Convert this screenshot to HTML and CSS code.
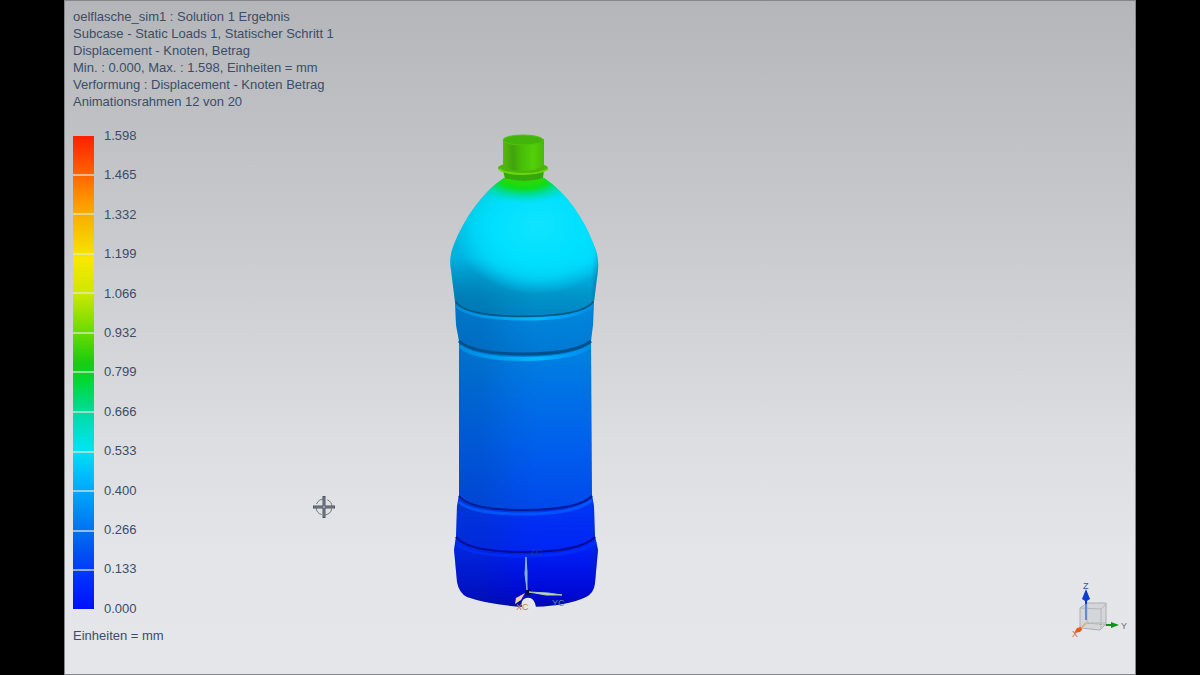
FILE: index.html
```
<!DOCTYPE html>
<html lang="de">

  <head>
    <meta charset="utf-8">
    <title>oelflasche_sim1</title>
    <link rel="stylesheet" href="styles.css">
  </head>
  <body>
    <main class="viewport">
      <div class="result-info">
        <div>oelflasche_sim1 : Solution 1 Ergebnis</div>
        <div>Subcase - Static Loads 1, Statischer Schritt 1</div>
        <div>Displacement - Knoten, Betrag</div>
        <div>Min. : 0.000, Max. : 1.598, Einheiten = mm</div>
        <div>Verformung : Displacement - Knoten Betrag</div>
        <div>Animationsrahmen 12 von 20</div>
      </div>

      <div class="legend">
        <div class="legend-bar">
          <i></i><i></i><i></i><i></i><i></i><i></i><i></i><i></i><i></i><i></i><i></i><i></i>
        </div>
        <ul class="legend-values">
          <li>1.598</li>
          <li>1.465</li>
          <li>1.332</li>
          <li>1.199</li>
          <li>1.066</li>
          <li>0.932</li>
          <li>0.799</li>
          <li>0.666</li>
          <li>0.533</li>
          <li>0.400</li>
          <li>0.266</li>
          <li>0.133</li>
          <li>0.000</li>
        </ul>
      </div>
      <div class="units">Einheiten = mm</div>

      <!-- deformed model -->
      <svg class="model" viewBox="440 125 170 490" width="170" height="490">
        <defs>
          <linearGradient id="cap" x1="0" x2="1" y1="0" y2="0">
            <stop offset="0" stop-color="#58b80c"/>
            <stop offset=".25" stop-color="#3fa50c"/>
            <stop offset=".45" stop-color="#46bd08"/>
            <stop offset=".75" stop-color="#52d008"/>
            <stop offset="1" stop-color="#48b80a"/>
          </linearGradient>
          <radialGradient id="collar" cx=".5" cy=".5" r=".5">
            <stop offset="0" stop-color="#20e000"/>
            <stop offset=".45" stop-color="#10dc18"/>
            <stop offset=".65" stop-color="#00dc80" stop-opacity=".85"/>
            <stop offset="1" stop-color="#00dcc8" stop-opacity="0"/>
          </radialGradient>
          <linearGradient id="dome" gradientUnits="userSpaceOnUse" x1="0" x2="0" y1="174" y2="318">
            <stop offset="0" stop-color="#00dca0"/>
            <stop offset=".2" stop-color="#00dcd0"/>
            <stop offset=".35" stop-color="#00dcf8"/>
            <stop offset=".58" stop-color="#00d4fc"/>
            <stop offset=".72" stop-color="#00acdc"/>
            <stop offset=".84" stop-color="#0094c8"/>
            <stop offset="1" stop-color="#0084c4"/>
          </linearGradient>
          <linearGradient id="band" gradientUnits="userSpaceOnUse" x1="0" x2="0" y1="304" y2="356">
            <stop offset="0" stop-color="#0088dc"/>
            <stop offset="1" stop-color="#0078d4"/>
          </linearGradient>
          <linearGradient id="trunk" gradientUnits="userSpaceOnUse" x1="0" x2="0" y1="343" y2="510">
            <stop offset="0" stop-color="#0084e0"/>
            <stop offset=".25" stop-color="#0074e4"/>
            <stop offset=".6" stop-color="#0060ec"/>
            <stop offset="1" stop-color="#0048ec"/>
          </linearGradient>
          <linearGradient id="low" gradientUnits="userSpaceOnUse" x1="0" x2="0" y1="497" y2="552">
            <stop offset="0" stop-color="#0038f4"/>
            <stop offset="1" stop-color="#0024f4"/>
          </linearGradient>
          <linearGradient id="base" gradientUnits="userSpaceOnUse" x1="0" x2="0" y1="538" y2="607">
            <stop offset="0" stop-color="#0028ff"/>
            <stop offset=".45" stop-color="#0014e8"/>
            <stop offset=".8" stop-color="#0008d4"/>
            <stop offset="1" stop-color="#0008b0"/>
          </linearGradient>
          <linearGradient id="shade" gradientUnits="userSpaceOnUse" x1="452" x2="598" y1="0" y2="0">
            <stop offset="0" stop-color="#003878" stop-opacity=".22"/>
            <stop offset=".2" stop-color="#003878" stop-opacity=".2"/>
            <stop offset=".42" stop-color="#003070" stop-opacity=".06"/>
            <stop offset=".6" stop-color="#003070" stop-opacity="0"/>
            <stop offset=".95" stop-color="#003070" stop-opacity="0"/>
            <stop offset="1" stop-color="#002060" stop-opacity=".3"/>
          </linearGradient>
          <linearGradient id="rim" gradientUnits="userSpaceOnUse" x1="455" x2="594" y1="0" y2="0">
            <stop offset="0" stop-color="#00a8ff" stop-opacity=".4"/>
            <stop offset=".6" stop-color="#00b8ff"/>
            <stop offset="1" stop-color="#00a0ff" stop-opacity=".3"/>
          </linearGradient>
          <radialGradient id="glow" cx=".5" cy=".5" r=".5">
            <stop offset="0" stop-color="#10e4ff"/>
            <stop offset=".5" stop-color="#00e0ff"/>
            <stop offset=".75" stop-color="#00e0ff" stop-opacity=".7"/>
            <stop offset="1" stop-color="#00e0ff" stop-opacity="0"/>
          </radialGradient>
          <clipPath id="dome-clip">
            <path d="M504 178C480 194 461 224 452 250Q449 260 451 270L455 302Q465 317 524 317T594 302L598 270Q599 258 595 248C586 222 568 194 544 178Z"/>
          </clipPath>
        </defs>

        <!-- base -->
        <path fill="url(#base)" d="M456 536L454 550L457 582Q459 593 467 597Q490 605 524 607Q566 607 586 597Q594 593 595 583L598 550L595 536Q582 526 524 526T456 536Z"/>
        <path fill="url(#shade)" d="M456 536L454 550L457 582Q459 593 467 597Q490 605 524 607Q566 607 586 597Q594 593 595 583L598 550L595 536Z"/>
        <path fill="none" stroke="#0034ff" stroke-width="3" stroke-opacity=".6" d="M457 544Q470 556 524 556T596 542"/>
        <!-- lower band -->
        <path fill="url(#low)" d="M459 495L457 506L456 536Q468 552 524 552T595 536L594 506L592 495Z"/>
        <path fill="url(#shade)" d="M459 495L457 506L456 536Q468 552 524 552T595 536L594 506L592 495Z"/>
        <path fill="none" stroke="#000c90" stroke-width="2" d="M456 537Q468 552 524 552T595 537"/>
        <path fill="none" stroke="#0064ff" stroke-width="3" stroke-opacity=".7" d="M459 502Q472 514 524 514T592 500"/>
        <!-- trunk -->
        <path fill="url(#trunk)" d="M459 341L459 495Q470 510 524 510T592 495L591 341Z"/>
        <path fill="url(#shade)" d="M459 341L459 495Q470 510 524 510T592 495L591 341Z"/>
        <path fill="none" stroke="#001c90" stroke-width="2" d="M459 496Q470 510 524 510T592 496"/>
        <path fill="none" stroke="url(#rim)" stroke-width="4" d="M460 346Q474 359 524 359T590 346"/>
        <!-- upper band -->
        <path fill="url(#band)" d="M455 301L456 325L459 341Q472 355 524 355T591 341L593 325L594 301Z"/>
        <path fill="url(#shade)" d="M455 301L456 325L459 341Q472 355 524 355T591 341L593 325L594 301Z"/>
        <path fill="none" stroke="#00508c" stroke-width="3" d="M459 341Q472 354 524 354T591 341"/>
        <path fill="none" stroke="url(#rim)" stroke-width="3" d="M456 306Q470 319 524 319T593 306"/>
        <!-- shoulder -->
        <g clip-path="url(#dome-clip)">
          <rect x="448" y="174" width="152" height="146" fill="url(#dome)"/>
          <rect x="448" y="174" width="152" height="146" fill="url(#shade)"/>
          <ellipse cx="538" cy="226" rx="86" ry="68" fill="url(#glow)"/>
          <ellipse cx="524" cy="176" rx="60" ry="28" fill="url(#collar)"/>
          <path fill="none" stroke="#00587c" stroke-width="3" d="M455 302Q465 317 524 317T594 302"/>
        </g>
        <!-- neck -->
        <path fill="#35a80c" d="M503 170H544L543 178Q524 187 505 179Z"/>
        <path fill="#28d80c" d="M505 178Q524 184 543 178Q548 184 524 186Q500 184 505 178Z"/>
        <ellipse cx="523" cy="168" rx="25" ry="6" fill="#4cb40c"/>
        <path fill="none" stroke="#68d80c" stroke-width="2" d="M499 169Q506 174 523 174T548 169"/>
        <path fill="url(#cap)" d="M503 139V165Q510 171 523 171T544 165V139Z"/>
        <ellipse cx="523" cy="140" rx="20" ry="5" fill="#42b40a" stroke="#54c40c"/>

        <!-- work coordinate system -->
        <path fill="#e6e8ec" d="M522 607Q520 600 526 598Q534 596 536 607V609H522Z"/>
        <circle cx="528" cy="592" r="3" fill="#000850"/>
        <path fill="#8cb4d8" stroke="#8cb4d8" d="M526 557L527 572V590L525 574Z"/>
        <path fill="#c0dcb8" stroke="#a8ccb0" d="M529 592L548 593L562 595L546 595Z"/>
        <path fill="#f0d0b0" d="M525 593L516 598L515 604L521 600Z"/>
        <text class="axis" x="530" y="555" fill="#1838b8">ZC</text>
        <text class="axis" x="552" y="606" fill="#6088a0">YC</text>
        <text class="axis" x="516" y="610" fill="#d07848">XC</text>
      </svg>

      <svg class="cursor" viewBox="0 0 22 22" width="22" height="22">
        <circle cx="11" cy="11" r="8" fill="none" stroke="#70757c" stroke-dasharray="9 4" stroke-dashoffset="-2"/>
        <path stroke="#4c535c" stroke-width="3" d="M11 0V10M11 12V22M0 11H10M12 11H22"/>
        <path stroke="#848c96" d="M11 1V21M1 11H21"/>
      </svg>

      <!-- view triad -->
      <svg class="triad" viewBox="1070 580 60 60" width="60" height="60">
        <path fill="#c4c7ca" fill-opacity=".5" stroke="#abaeb2" d="M1080 608L1087 603H1106V624L1100 630L1080 628Z"/>
        <path fill="none" stroke="#b4b7ba" d="M1080 608L1101 609L1106 604M1101 609V629M1087 604V623H1106M1087 623L1080 628"/>
        <path stroke="#6888cc" stroke-width="2" d="M1086 604V620"/>
        <path fill="#0c3cd0" d="M1086 589L1090 599L1087 601V604H1085V601L1082 599Z"/>
        <path stroke="#a8b8a0" stroke-dasharray="3 1" d="M1087 623L1106 625"/>
        <path fill="#109018" d="M1106 624L1111 624V622L1119 625L1111 628V626H1106Z"/>
        <path stroke="#e0b090" stroke-width="2" d="M1086 623L1081 628"/>
        <path fill="#e85818" d="M1074 633L1077 628L1081 627L1082 630L1080 632Z"/>
        <text class="axis" x="1083" y="589" fill="#2858b0">Z</text>
        <text class="axis" x="1121" y="629" fill="#687078">Y</text>
        <text class="axis" x="1072" y="637" fill="#d87040">X</text>
      </svg>
    </main>
  </body>
</html>
```
FILE: styles.css
```
* {
  box-sizing: border-box
}

body {
  margin: 0;
  padding: 0 64px;
  background-color: #000;
  color: #3a4d69;
  font-family: "Liberation Sans", Arial, sans-serif;
  font-size: 13px;
}

.viewport {
  position: relative;
  min-height: 100vh;
  padding: 7px 8px;
  border: 1px solid #85878c;
  background: linear-gradient(#b5b6b9, #c8c9cc 33%, #dddee1 66%, #e4e5e9 82%, #e5e6ea);
  overflow: hidden;
}

.result-info {
  line-height: 17px;
}

.legend {
  display: flex;
  gap: 10px;
  height: 489px;
  margin-top: 18px;
}

.legend-bar {
  display: flex;
  flex-direction: column;
  width: 21px;
  margin: 8px 0;
  background: linear-gradient(#ff2000, #ff5a00 7%, #ff9000 13%, #f8b000 17%, #f8e800 26%, #d0e800 33%, #70dc00 41%, #18cc10 48%, #00d838 52%, #00dca8 59%, #00e4f0 66%, #00b4ff 73%, #0088f4 80%, #0058f0 87%, #0028ff 95%, #0010f8);
}

.legend-bar i {
  flex: 1;
  border-bottom: 2px solid rgba(225, 232, 215, 0.65);
}

.legend-bar i:last-child {
  border-bottom: 0;
}

.legend-values {
  display: flex;
  flex-direction: column;
  justify-content: space-between;
  margin: 0;
  padding: 0;
  list-style: none;
  line-height: 16px;
}

.units {
  padding-top: 10px;
  line-height: 17px;
}

.model {
  position: absolute;
  top: 124px;
  left: 375px;
}

.cursor {
  position: absolute;
  top: 495px;
  left: 248px;
}

.triad {
  position: absolute;
  right: 5px;
  bottom: 34px;
}

.axis {
  font-size: 9px;
}
```
